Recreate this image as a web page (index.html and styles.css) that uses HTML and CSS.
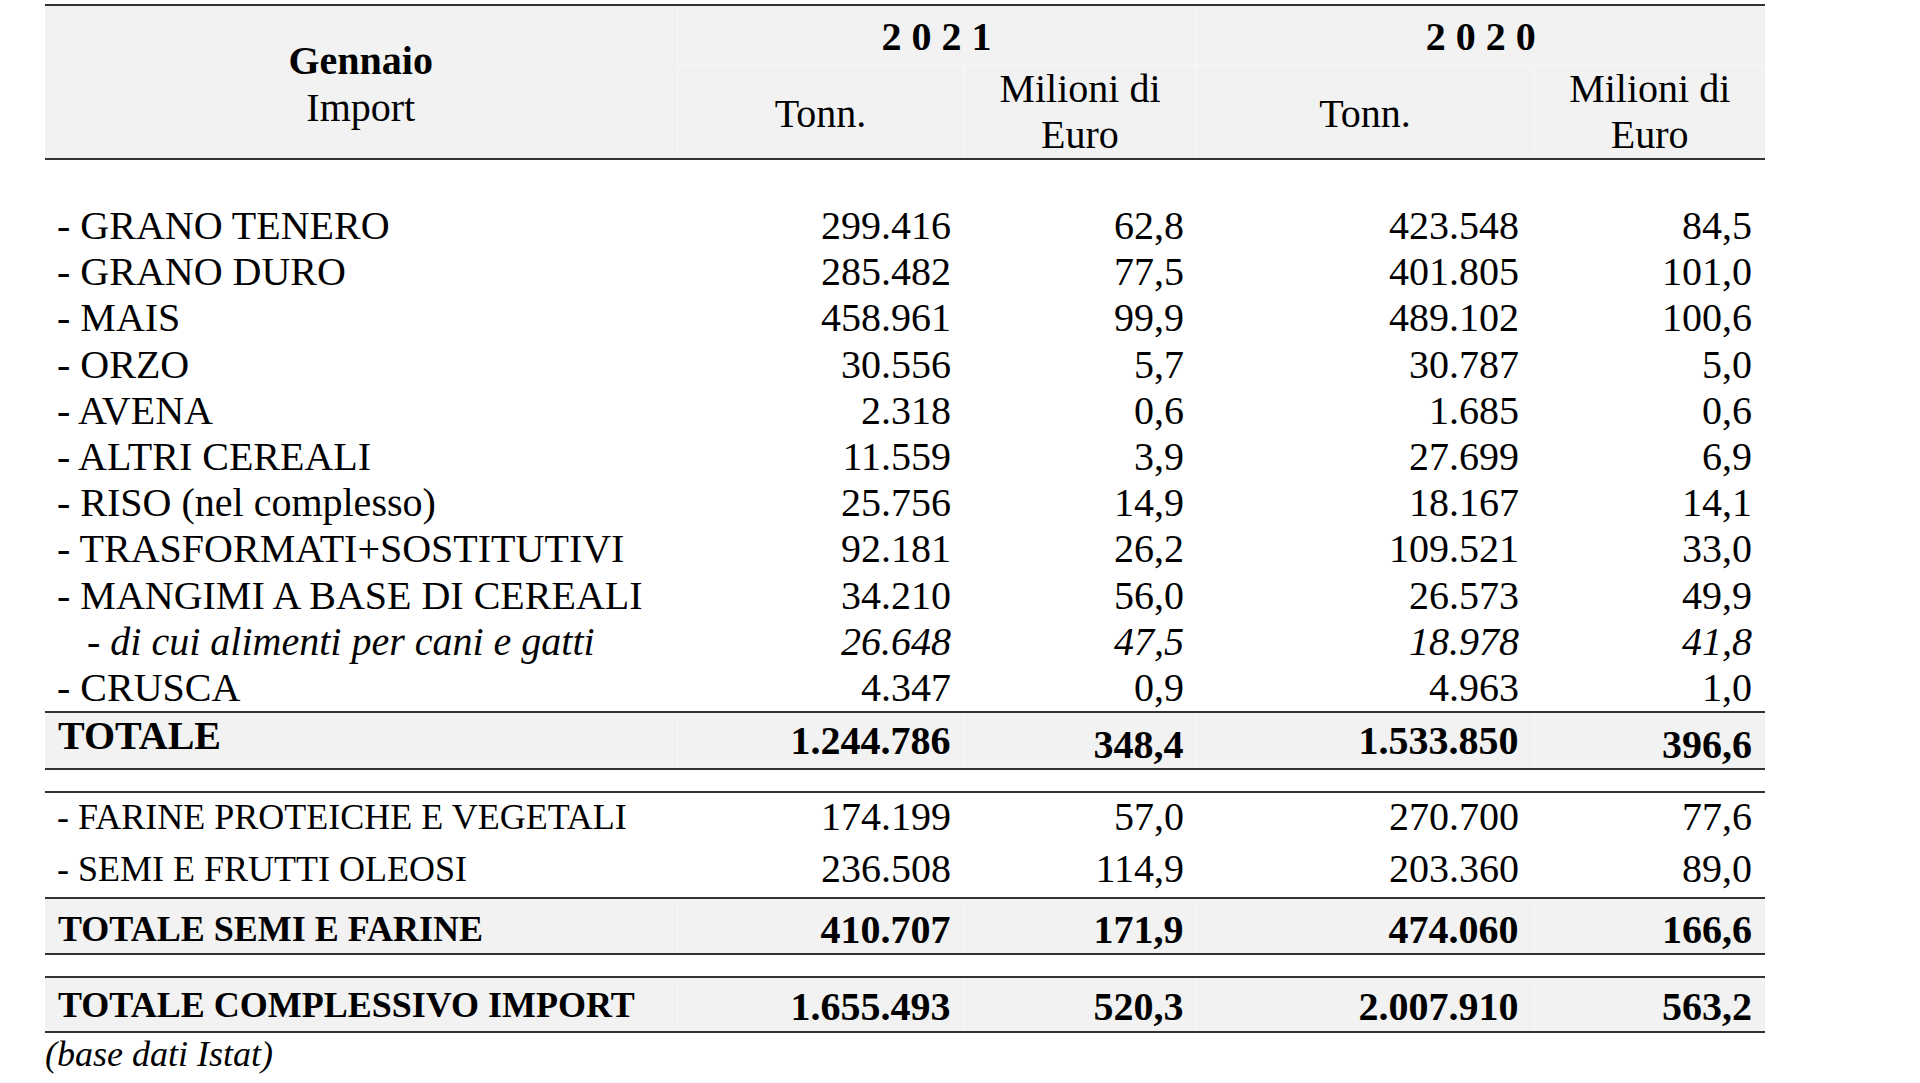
FILE: index.html
```html
<!DOCTYPE html>
<html lang="it">
<head>
<meta charset="utf-8">
<title>Gennaio Import</title>
<link rel="stylesheet" href="styles.css">
</head>
<body>
<div class="page">
<table class="imp">
  <colgroup>
    <col class="c-label">
    <col class="c-t21">
    <col class="c-m21">
    <col class="c-t20">
    <col class="c-m20">
  </colgroup>
  <thead>
    <tr class="h-year">
      <th rowspan="2" class="h-label"><span class="b">Gennaio</span><br>Import</th>
      <th colspan="2" class="year">2 0 2 1</th>
      <th colspan="2" class="year">2 0 2 0</th>
    </tr>
    <tr class="h-sub">
      <th class="unit">Tonn.</th>
      <th class="unit2">Milioni di<br>Euro</th>
      <th class="unit">Tonn.</th>
      <th class="unit2">Milioni di<br>Euro</th>
    </tr>
  </thead>
  <tbody>
    <tr class="spacer"><td colspan="5"></td></tr>
    <tr class="row"><td class="lab">- GRANO TENERO</td><td class="n t21">299.416</td><td class="n m21">62,8</td><td class="n t20">423.548</td><td class="n m20">84,5</td></tr>
    <tr class="row"><td class="lab">- GRANO DURO</td><td class="n t21">285.482</td><td class="n m21">77,5</td><td class="n t20">401.805</td><td class="n m20">101,0</td></tr>
    <tr class="row"><td class="lab">- MAIS</td><td class="n t21">458.961</td><td class="n m21">99,9</td><td class="n t20">489.102</td><td class="n m20">100,6</td></tr>
    <tr class="row"><td class="lab">- ORZO</td><td class="n t21">30.556</td><td class="n m21">5,7</td><td class="n t20">30.787</td><td class="n m20">5,0</td></tr>
    <tr class="row"><td class="lab">- AVENA</td><td class="n t21">2.318</td><td class="n m21">0,6</td><td class="n t20">1.685</td><td class="n m20">0,6</td></tr>
    <tr class="row"><td class="lab">- ALTRI CEREALI</td><td class="n t21">11.559</td><td class="n m21">3,9</td><td class="n t20">27.699</td><td class="n m20">6,9</td></tr>
    <tr class="row"><td class="lab">- RISO (nel complesso)</td><td class="n t21">25.756</td><td class="n m21">14,9</td><td class="n t20">18.167</td><td class="n m20">14,1</td></tr>
    <tr class="row"><td class="lab">- TRASFORMATI+SOSTITUTIVI</td><td class="n t21">92.181</td><td class="n m21">26,2</td><td class="n t20">109.521</td><td class="n m20">33,0</td></tr>
    <tr class="row"><td class="lab">- MANGIMI A BASE DI CEREALI</td><td class="n t21">34.210</td><td class="n m21">56,0</td><td class="n t20">26.573</td><td class="n m20">49,9</td></tr>
    <tr class="row sub"><td class="lab">- di cui alimenti per cani e gatti</td><td class="n t21">26.648</td><td class="n m21">47,5</td><td class="n t20">18.978</td><td class="n m20">41,8</td></tr>
    <tr class="row"><td class="lab">- CRUSCA</td><td class="n t21">4.347</td><td class="n m21">0,9</td><td class="n t20">4.963</td><td class="n m20">1,0</td></tr>
    <tr class="total"><td class="lab">TOTALE</td><td class="n t21">1.244.786</td><td class="n m21">348,4</td><td class="n t20">1.533.850</td><td class="n m20">396,6</td></tr>
    <tr class="gap"><td colspan="5"></td></tr>
    <tr class="row2 first"><td class="lab">- FARINE PROTEICHE E VEGETALI</td><td class="n t21">174.199</td><td class="n m21">57,0</td><td class="n t20">270.700</td><td class="n m20">77,6</td></tr>
    <tr class="row2"><td class="lab">- SEMI E FRUTTI OLEOSI</td><td class="n t21">236.508</td><td class="n m21">114,9</td><td class="n t20">203.360</td><td class="n m20">89,0</td></tr>
    <tr class="total2"><td class="lab">TOTALE SEMI E FARINE</td><td class="n t21">410.707</td><td class="n m21">171,9</td><td class="n t20">474.060</td><td class="n m20">166,6</td></tr>
    <tr class="gap"><td colspan="5"></td></tr>
    <tr class="total2 last"><td class="lab">TOTALE COMPLESSIVO IMPORT</td><td class="n t21">1.655.493</td><td class="n m21">520,3</td><td class="n t20">2.007.910</td><td class="n m20">563,2</td></tr>
  </tbody>
</table>
<p class="source">(base dati Istat)</p>
</div>
</body>
</html>
```

FILE: styles.css
```css
html, body {
  margin: 0;
  padding: 0;
  background: #ffffff;
}

body {
  font-family: "Liberation Serif", "Times New Roman", serif;
  color: #000000;
}

.page {
  padding: 4px 0 0 45px;
}

.imp {
  border-collapse: collapse;
  table-layout: fixed;
  width: 1720px;
  font-size: 40px;
  line-height: 46px;
}

.c-label { width: 632px; }
.c-t21 { width: 287px; }
.c-m21 { width: 232px; }
.c-t20 { width: 338px; }
.c-m20 { width: 231px; }

.imp th,
.imp td {
  box-sizing: border-box;
  padding: 0;
  font-weight: normal;
}

/* ---------- header ---------- */
.imp thead th {
  background: #f2f2f2;
  text-align: center;
  vertical-align: top;
  line-height: 47px;
}

.h-year th {
  border-top: 2px solid #333333;
  height: 60px;
}

.h-sub th {
  border-bottom: 2px solid #333333;
  border-top: 1px solid #f8f8f8;
  height: 94px;
}

.imp .h-label {
  padding-top: 31px;
  border-bottom: 2px solid #333333;
  border-right: 1px solid #f8f8f8;
}

.h-label .b {
  font-weight: bold;
}

.imp .year {
  font-weight: bold;
  padding-top: 7px;
  border-left: 1px solid #f8f8f8;
}

.imp .unit {
  padding-top: 24px;
}

.imp .unit2 {
  line-height: 46px;
}

.h-sub th + th {
  border-left: 1px solid #f8f8f8;
}

/* ---------- body ---------- */
.spacer td {
  height: 44px;
}

.row td {
  height: 46.2px;
  vertical-align: middle;
}

.imp .lab {
  text-align: left;
  padding-left: 12px;
  white-space: nowrap;
}

.n {
  text-align: right;
  white-space: nowrap;
}

.imp .t21 { padding-right: 13px; }
.imp .m21 { padding-right: 12px; }
.imp .t20 { padding-right: 15px; }
.imp .m20 { padding-right: 13px; }

.sub td {
  font-style: italic;
}

.imp .sub .lab {
  padding-left: 42px;
}

.total td {
  background: #f2f2f2;
  font-weight: bold;
  border-top: 2px solid #333333;
  border-bottom: 2px solid #333333;
  height: 57px;
}

.total td + td {
  border-left: 1px solid #f8f8f8;
}

.imp .total .lab {
  vertical-align: top;
  padding-left: 13px;
}

.imp .total .t21,
.imp .total .t20 {
  vertical-align: bottom;
  padding-bottom: 4px;
}

.imp .total .m21,
.imp .total .m20 {
  vertical-align: bottom;
}

.gap td {
  height: 23px;
}

.row2 td {
  height: 53px;
  vertical-align: top;
  padding-top: 1px;
}

.imp .row2.first td {
  border-top: 2px solid #333333;
  padding-top: 1px;
}

.row2 .lab,
.total2 .lab {
  font-size: 36px;
}

.total2 td {
  background: #f2f2f2;
  font-weight: bold;
  border-top: 2px solid #333333;
  border-bottom: 2px solid #333333;
  height: 56px;
  vertical-align: top;
  padding-top: 8px;
}

.total2 td + td {
  border-left: 1px solid #f8f8f8;
}

.imp .total2 .lab {
  padding-top: 7px;
  padding-left: 13px;
}

.imp .total2.last td {
  height: 55px;
  padding-top: 6px;
}

.imp .total2.last .lab {
  padding-top: 4px;
}

.source {
  margin: 1px 0 0 0;
  font-size: 36px;
  line-height: 41px;
  font-style: italic;
}
```
